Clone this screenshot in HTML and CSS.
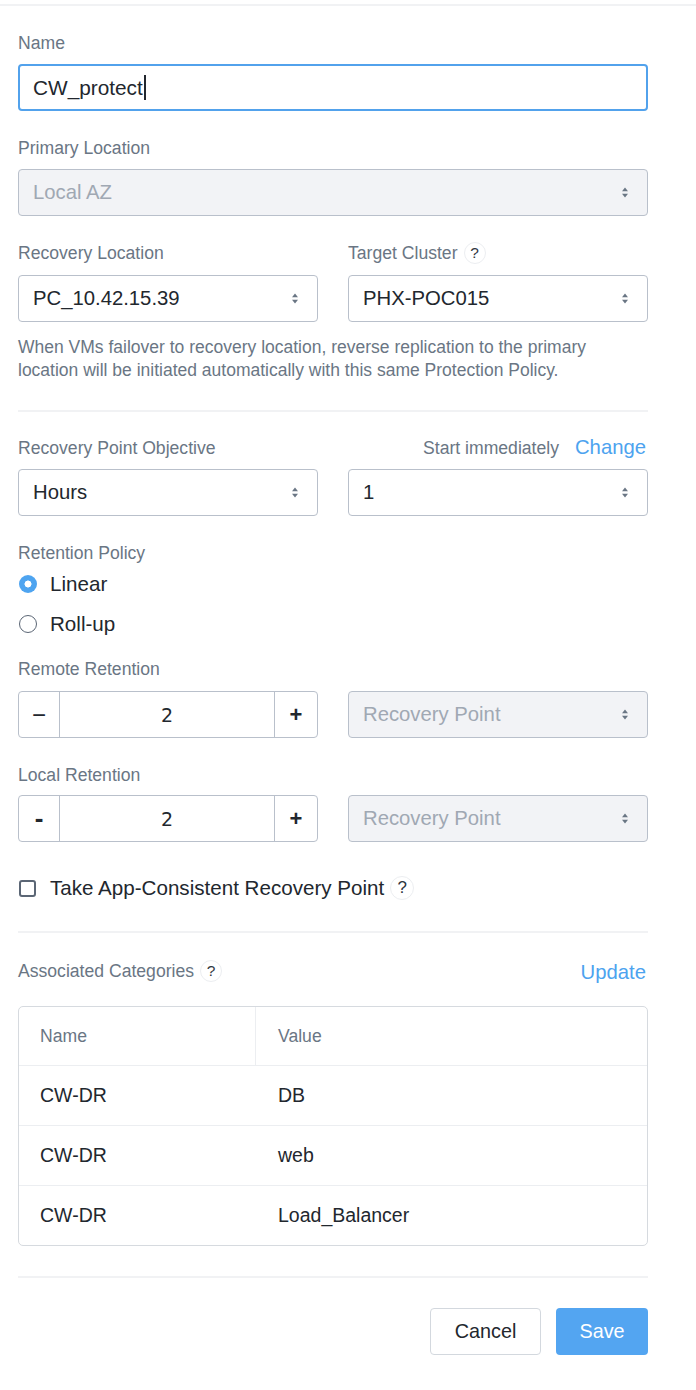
FILE: index.html
```html
<!DOCTYPE html>
<html>
<head>
<meta charset="utf-8">
<link rel="stylesheet" href="styles.css">
</head>
<body>
<div class="topline"></div>
<div class="form">
  <div class="field">
    <div class="label">Name</div>
    <div class="input focus"><span class="val">CW_protect</span><span class="caret"></span></div>
  </div>

  <div class="field">
    <div class="label">Primary Location</div>
    <div class="select disabled"><span>Local AZ</span><svg class="arr" width="6" height="11" viewBox="0 0 6 11"><path d="M0 4.2 L3 0.5 L6 4.2 Z M0 6.8 L3 10.5 L6 6.8 Z"/></svg></div>
  </div>

  <div class="grid2 field-tight">
    <div>
      <div class="label">Recovery Location</div>
      <div class="select"><span>PC_10.42.15.39</span><svg class="arr" width="6" height="11" viewBox="0 0 6 11"><path d="M0 4.2 L3 0.5 L6 4.2 Z M0 6.8 L3 10.5 L6 6.8 Z"/></svg></div>
    </div>
    <div>
      <div class="label with-help">Target Cluster <span class="help">?</span></div>
      <div class="select"><span>PHX-POC015</span><svg class="arr" width="6" height="11" viewBox="0 0 6 11"><path d="M0 4.2 L3 0.5 L6 4.2 Z M0 6.8 L3 10.5 L6 6.8 Z"/></svg></div>
    </div>
  </div>
  <p class="note">When VMs failover to recovery location, reverse replication to the primary location will be initiated automatically with this same Protection Policy.</p>

  <div class="divider d1"></div>

  <div class="field">
    <div class="label-row">
      <div class="label">Recovery Point Objective</div>
      <div class="right"><span class="label">Start immediately</span><a class="link">Change</a></div>
    </div>
    <div class="grid2">
      <div class="select"><span>Hours</span><svg class="arr" width="6" height="11" viewBox="0 0 6 11"><path d="M0 4.2 L3 0.5 L6 4.2 Z M0 6.8 L3 10.5 L6 6.8 Z"/></svg></div>
      <div class="select"><span>1</span><svg class="arr" width="6" height="11" viewBox="0 0 6 11"><path d="M0 4.2 L3 0.5 L6 4.2 Z M0 6.8 L3 10.5 L6 6.8 Z"/></svg></div>
    </div>
  </div>

  <div class="radios">
    <div class="label">Retention Policy</div>
    <div class="radio-row"><span class="radio on"></span><span class="text">Linear</span></div>
    <div class="radio-row"><span class="radio"></span><span class="text">Roll-up</span></div>
  </div>

  <div class="field remote">
    <div class="label">Remote Retention</div>
    <div class="grid2">
      <div class="stepper"><span class="sbtn minus">&#8722;</span><span class="num">2</span><span class="sbtn plus">+</span></div>
      <div class="select disabled"><span>Recovery Point</span><svg class="arr" width="6" height="11" viewBox="0 0 6 11"><path d="M0 4.2 L3 0.5 L6 4.2 Z M0 6.8 L3 10.5 L6 6.8 Z"/></svg></div>
    </div>
  </div>

  <div class="field local">
    <div class="label">Local Retention</div>
    <div class="grid2">
      <div class="stepper"><span class="sbtn minus bold">-</span><span class="num">2</span><span class="sbtn plus">+</span></div>
      <div class="select disabled"><span>Recovery Point</span><svg class="arr" width="6" height="11" viewBox="0 0 6 11"><path d="M0 4.2 L3 0.5 L6 4.2 Z M0 6.8 L3 10.5 L6 6.8 Z"/></svg></div>
    </div>
  </div>

  <div class="check-row"><span class="checkbox"></span><span class="text">Take App-Consistent Recovery Point</span><span class="help big">?</span></div>

  <div class="divider d2"></div>

  <div class="label-row cats">
    <div class="label with-help">Associated Categories <span class="help">?</span></div>
    <a class="link">Update</a>
  </div>

  <div class="table">
    <div class="tr th"><div class="td c1">Name</div><div class="td c2">Value</div></div>
    <div class="tr"><div class="td c1">CW-DR</div><div class="td c2">DB</div></div>
    <div class="tr"><div class="td c1">CW-DR</div><div class="td c2">web</div></div>
    <div class="tr last"><div class="td c1">CW-DR</div><div class="td c2">Load_Balancer</div></div>
  </div>

  <div class="divider d3"></div>

  <div class="actions">
    <button class="btn cancel">Cancel</button>
    <button class="btn save">Save</button>
  </div>
</div>
</body>
</html>
```
FILE: styles.css
```css
* { box-sizing: border-box; }
html, body { margin: 0; padding: 0; background: #fff; }
body {
  font-family: "Liberation Sans", Arial, sans-serif;
  color: #22272e;
  width: 696px;
  height: 1390px;
  overflow: hidden;
}
.topline {
  margin-top: 4px;
  height: 2px;
  background: #f1f2f4;
}
.form {
  padding: 27px 48px 0 18px;
}
.label {
  font-size: 17.6px;
  line-height: 20px;
  color: #6a7684;
}
.label.with-help {
  display: flex;
  align-items: center;
  height: 20px;
  gap: 6px;
}
.field { margin-bottom: 27px; }
.field > .label, .grid2 > div > .label { margin-bottom: 11px; }
.field-tight > div > .label { margin-bottom: 12px; }
.remote > .label { margin-bottom: 12px; }
.local > .label { margin-bottom: 10px; }
.input, .select {
  height: 47px;
  border: 1.5px solid #b9c0cb;
  border-radius: 4px;
  display: flex;
  align-items: center;
  padding: 0 19px 0 14px;
  font-size: 20.3px;
  color: #22272e;
}
.input.focus {
  border: 2px solid #52a2ec;
  padding-left: 13px;
  font-size: 20.8px;
}
.caret {
  display: inline-block;
  width: 2px;
  height: 25px;
  background: #22272e;
  margin-left: 1px;
}
.select { justify-content: space-between; }
.select.disabled {
  background: #f2f3f6;
  color: #a0a8b3;
}
.arr { fill: #6a7684; flex: none; }
.grid2 {
  display: grid;
  grid-template-columns: 300px 300px;
  column-gap: 30px;
}
.help {
  display: inline-flex;
  align-items: center;
  justify-content: center;
  flex: none;
  width: 22px;
  height: 22px;
  border: 1.5px solid #eceef1;
  border-radius: 50%;
  font-size: 15.5px;
  color: #2f3640;
}
.help.big { width: 24px; height: 24px; font-size: 17px; margin-left: 6px; }
.note {
  margin: 14px 0 0;
  max-width: 600px;
  font-size: 17.5px;
  line-height: 23px;
  color: #6a7684;
}
.divider {
  height: 2px;
  background: #f1f2f4;
}
.d1 { margin-top: 28px; margin-bottom: 25px; }
.label-row {
  display: flex;
  justify-content: space-between;
  align-items: baseline;
  height: 20px;
  margin-bottom: 12px;
}
.right { display: flex; align-items: baseline; gap: 16px; }
.link {
  color: #4da3ef;
  font-size: 20.3px;
  line-height: 20px;
  margin-right: 2px;
}
.radios { margin-bottom: 20px; }
.radios > .label { margin-bottom: 6px; }
.radio-row {
  display: flex;
  align-items: center;
  height: 30px;
  margin-bottom: 10px;
}
.radio-row:last-child { margin-bottom: 0; }
.radio {
  width: 18px;
  height: 18px;
  border-radius: 50%;
  border: 1.5px solid #5b6675;
  margin-left: 1px;
  margin-right: 13px;
  flex: none;
}
.radio.on {
  border: none;
  background: radial-gradient(circle, #fff 0 3.2px, #4ea4f0 3.8px);
}
.text { font-size: 20.6px; color: #22272e; }
.stepper {
  height: 47px;
  border: 1.5px solid #b9c0cb;
  border-radius: 4px;
  display: flex;
  align-items: stretch;
}
.sbtn {
  display: flex;
  align-items: center;
  justify-content: center;
  font-size: 22px;
  font-weight: bold;
  color: #22272e;
}
.minus { width: 41px; border-right: 1.5px solid #b9c0cb; font-weight: normal; font-size: 24px; }
.minus.bold { font-weight: bold; font-size: 26px; }
.plus { width: 43px; border-left: 1.5px solid #b9c0cb; }
.num {
  flex: 1;
  display: flex;
  align-items: center;
  justify-content: center;
  font-family: "DejaVu Sans", sans-serif;
  font-size: 19px;
}
.check-row {
  display: flex;
  align-items: center;
  height: 30px;
  margin-top: 31px;
}
.checkbox {
  width: 17px;
  height: 17px;
  border: 2px solid #5b6675;
  border-radius: 3px;
  margin-left: 1px;
  margin-right: 14px;
  flex: none;
}
.d2 { margin-top: 28px; margin-bottom: 25px; }
.cats { align-items: center; margin-bottom: 22px; height: 26px; }
.cats .link { position: relative; top: 1px; }
.table {
  border: 1.5px solid #d6dadf;
  border-radius: 5px;
}
.tr {
  display: flex;
  height: 60px;
  border-bottom: 1.5px solid #eceef1;
}
.tr.last { border-bottom: none; height: 59px; }
.th { height: 59px; }
.td {
  display: flex;
  align-items: center;
  font-size: 19.5px;
  color: #22272e;
}
.c1 { width: 237px; padding-left: 21px; }
.c2 { flex: 1; padding-left: 22px; }
.th .td { font-size: 17.6px; color: #6a7684; }
.th .c1 { border-right: 1.5px solid #eceef1; }
.d3 { margin-top: 30px; margin-bottom: 30px; }
.actions {
  display: flex;
  justify-content: flex-end;
  gap: 15px;
}
.btn {
  height: 47px;
  border-radius: 4px;
  font-family: "Liberation Sans", Arial, sans-serif;
  font-size: 19.8px;
  cursor: pointer;
}
.cancel {
  width: 111px;
  background: #fff;
  border: 1.5px solid #d3d8de;
  color: #22272e;
}
.save {
  width: 92px;
  background: #53a5f1;
  border: none;
  color: #fff;
}
```
